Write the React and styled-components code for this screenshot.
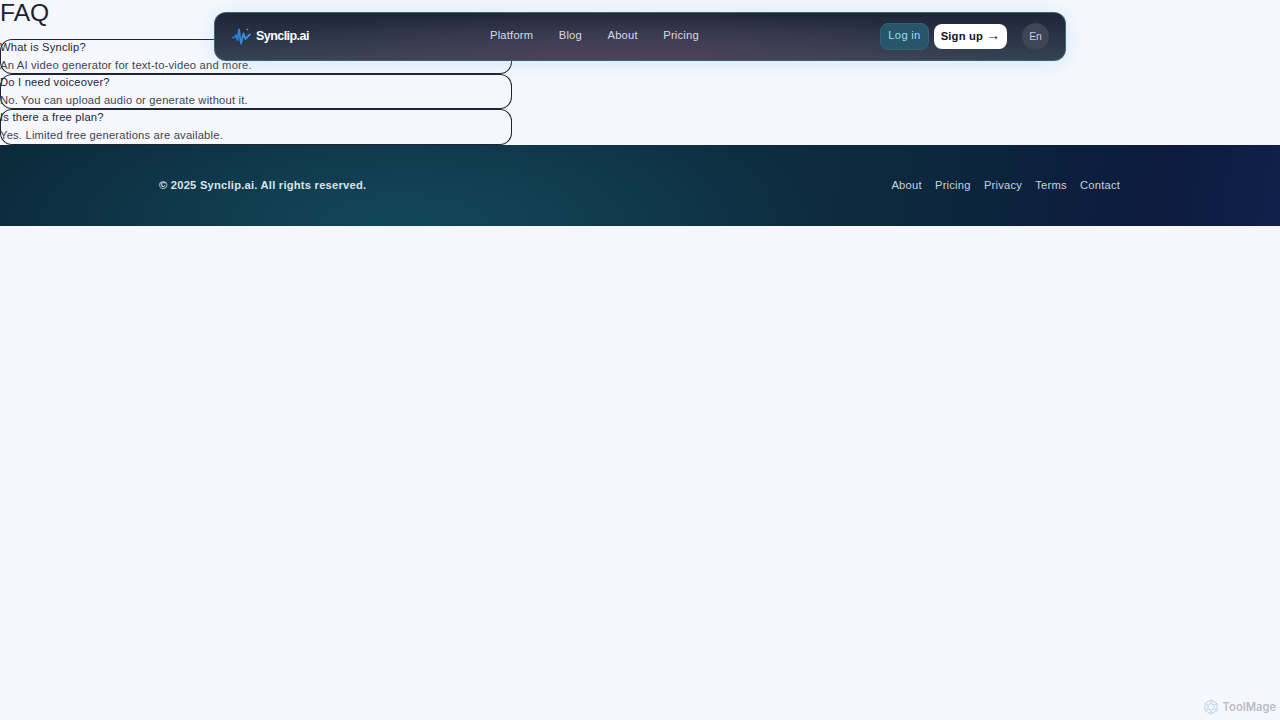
import React from "react";
import styled, { createGlobalStyle } from "styled-components";

const GlobalStyle = createGlobalStyle`
  html, body {
    margin: 0;
    padding: 0;
    background: #f5f7fc;
    font-family: "Liberation Sans", Arial, sans-serif;
    color: #1a2233;
  }
`;

const Page = styled.div`
  position: relative;
  width: 1280px;
  height: 720px;
  overflow: hidden;
`;

const Title = styled.h1`
  margin: 0;
  height: 39px;
  font-size: 24.6px;
  line-height: 26px;
  font-weight: 400;
  color: #1c2233;
`;

const FaqList = styled.section`
  width: 512px;
  display: flex;
  flex-direction: column;
`;

const FaqCard = styled.div`
  box-sizing: border-box;
  height: 35.2px;
  border-radius: 12px;
  box-shadow: inset 0 0 0 1px #1f2433;
  font-size: 11.2px;
  letter-spacing: 0.2px;
`;

const Question = styled.div`
  height: 17.6px;
  line-height: 17.4px;
  color: #20283a;
`;

const Answer = styled.div`
  height: 17.6px;
  line-height: 17px;
  color: #3c4454;
`;

const Footer = styled.footer`
  box-sizing: border-box;
  height: 81px;
  margin-top: 0.4px;
  padding: 0 160px 1px 159px;
  display: flex;
  align-items: center;
  justify-content: space-between;
  background:
    radial-gradient(ellipse 420px 130px at 400px 75px, #13465a 0%, rgba(19, 70, 90, 0) 100%),
    linear-gradient(100deg, #0b2b3b 0%, #0e3144 40%, #0c2a3d 68%, #0c1b3e 90%, #10204a 100%);
`;

const Copyright = styled.div`
  font-size: 11.2px;
  font-weight: 700;
  letter-spacing: 0.22px;
  color: #dbe3ea;
`;

const FooterLinks = styled.nav`
  display: flex;
  gap: 13.3px;
`;

const FooterLink = styled.a`
  font-size: 11.2px;
  letter-spacing: 0.2px;
  color: #c9d3dc;
`;

const NavBar = styled.header`
  position: absolute;
  top: 12px;
  left: 214px;
  width: 852px;
  height: 49px;
  box-sizing: border-box;
  padding: 0 16px 1px 17px;
  display: grid;
  grid-template-columns: 258px 1fr auto;
  align-items: center;
  border-radius: 12px;
  border: 1px solid rgba(70, 110, 125, 0.8);
  background:
    radial-gradient(ellipse 400px 50px at 48% 100%, #4e415c 0%, rgba(78, 65, 92, 0) 100%),
    linear-gradient(180deg, #1f2538 0%, #344354 100%);
  box-shadow: 0 2px 18px rgba(120, 200, 245, 0.28);
`;

const Brand = styled.div`
  display: flex;
  align-items: center;
  gap: 5px;
  color: #fff;
  font-size: 12.5px;
  font-weight: 700;
  letter-spacing: -0.55px;
`;

const NavLinks = styled.nav`
  display: flex;
  gap: 25.5px;
  padding-bottom: 2px;
`;

const NavLink = styled.a`
  font-size: 11.2px;
  letter-spacing: 0.2px;
  color: #d6dbe4;
`;

const Actions = styled.div`
  display: flex;
  align-items: center;
`;

const LoginButton = styled.button`
  box-sizing: border-box;
  width: 49px;
  height: 27px;
  padding: 0 0 2px;
  border: 1px solid #2f6377;
  border-radius: 8px;
  background: #27566a;
  color: #a5dcec;
  font-family: inherit;
  font-size: 11.2px;
  letter-spacing: 0.3px;
`;

const SignupButton = styled.button`
  width: 73px;
  height: 25px;
  margin-left: 5px;
  padding: 0 0 2px;
  border: none;
  border-radius: 8px;
  background: #fff;
  color: #10141f;
  font-family: inherit;
  font-size: 11.2px;
  font-weight: 700;
  letter-spacing: 0.2px;
`;

const Arrow = styled.span`
  font-size: 14px;
  font-weight: 400;
  letter-spacing: 0;
`;

const LangButton = styled.button`
  width: 27px;
  height: 27px;
  margin-left: 15px;
  padding: 0;
  border: none;
  border-radius: 50%;
  background: #3d4556;
  color: #c8ced6;
  font-family: inherit;
  font-size: 10.4px;
`;

const Watermark = styled.div`
  position: absolute;
  right: 4px;
  bottom: 5px;
  display: flex;
  align-items: center;
  gap: 4px;
  color: #b9bdc6;
  font-family: Inter, "Liberation Sans", sans-serif;
  font-size: 11.2px;
  font-weight: 600;
`;

const faqs = [
  ["What is Synclip?", "An AI video generator for text-to-video and more."],
  ["Do I need voiceover?", "No. You can upload audio or generate without it."],
  ["Is there a free plan?", "Yes. Limited free generations are available."],
];

const footerLinks = ["About", "Pricing", "Privacy", "Terms", "Contact"];
const navLinks = ["Platform", "Blog", "About", "Pricing"];

function WaveLogo() {
  return (
    <svg width="19" height="17" viewBox="0 0 19 17" fill="none">
      <defs>
        <linearGradient id="wave" x1="0" y1="0" x2="1" y2="0">
          <stop offset="0" stopColor="#2a6fc9" />
          <stop offset="1" stopColor="#3ca4ee" />
        </linearGradient>
      </defs>
      <path
        d="M0.800 9.500H2.500L4 7l1.500 5L7 1.500 9 15.500l2.500-10 2 5.500L17.800 6.500"
        stroke="url(#wave)"
        strokeWidth="1.8"
        strokeLinecap="round"
        strokeLinejoin="round"
      />
      <circle cx="15.500" cy="1.500" r="0.800" fill="#6cc0f2" />
    </svg>
  );
}

function ToolMageMark() {
  return (
    <svg width="16" height="16" viewBox="0 0 16 16" fill="none" stroke="#bcd2ea" strokeWidth="1">
      <path d="M8 1l6 3.500v7L8 15l-6-3.500v-7z" />
      <path d="M8 4.500l3 1.800v3.400l-3 1.800-3-1.800V6.300z" />
      <path d="M8 1v3.500M14 4.500l-3 1.800M14 11.500l-3-1.800M8 15v-3.500M2 11.500l3-1.800M2 4.500l3 1.800" />
    </svg>
  );
}

export default function App() {
  return (
    <Page>
      <GlobalStyle />
      <Title>FAQ</Title>
      <FaqList>
        {faqs.map(([question, answer]) => (
          <FaqCard key={question}>
            <Question>{question}</Question>
            <Answer>{answer}</Answer>
          </FaqCard>
        ))}
      </FaqList>
      <Footer>
        <Copyright>© 2025 Synclip.ai. All rights reserved.</Copyright>
        <FooterLinks>
          {footerLinks.map((link) => (
            <FooterLink key={link}>{link}</FooterLink>
          ))}
        </FooterLinks>
      </Footer>
      <NavBar>
        <Brand>
          <WaveLogo />
          Synclip.ai
        </Brand>
        <NavLinks>
          {navLinks.map((link) => (
            <NavLink key={link}>{link}</NavLink>
          ))}
        </NavLinks>
        <Actions>
          <LoginButton>Log in</LoginButton>
          <SignupButton>
            Sign up <Arrow>→</Arrow>
          </SignupButton>
          <LangButton>En</LangButton>
        </Actions>
      </NavBar>
      <Watermark>
        <ToolMageMark />
        ToolMage
      </Watermark>
    </Page>
  );
}
